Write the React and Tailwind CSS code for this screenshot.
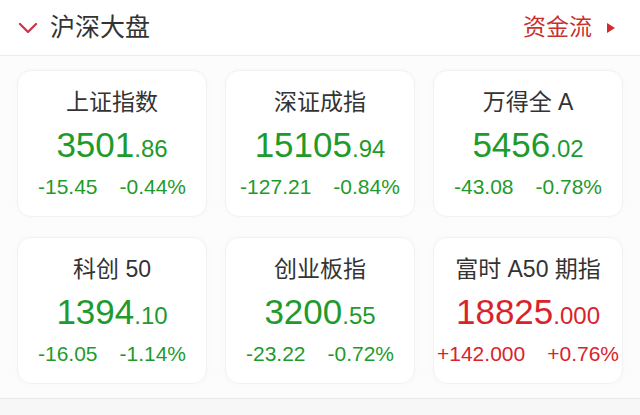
import React from 'react';

// Index snapshot cards, two rows of three
const INDICES = [
  { name: '上证指数', int: '3501', dec: '.86', chg: '-15.45', pct: '-0.44%', up: false },
  { name: '深证成指', int: '15105', dec: '.94', chg: '-127.21', pct: '-0.84%', up: false },
  { name: '万得全 A', int: '5456', dec: '.02', chg: '-43.08', pct: '-0.78%', up: false },
  { name: '科创 50', int: '1394', dec: '.10', chg: '-16.05', pct: '-1.14%', up: false },
  { name: '创业板指', int: '3200', dec: '.55', chg: '-23.22', pct: '-0.72%', up: false },
  { name: '富时 A50 期指', int: '18825', dec: '.000', chg: '+142.000', pct: '+0.76%', up: true },
];

const FONT = { fontFamily: '"Liberation Sans", "Noto Sans CJK SC", sans-serif' };

function IndexCard({ item }) {
  const color = item.up ? 'text-[#d9232b]' : 'text-[#1f9a2c]';
  return (
    <div className="h-[147px] bg-white rounded-[14px] border border-[#f2f2f2] shadow-[0_0_6px_rgba(0,0,0,0.025)] flex flex-col items-center pt-[17px]">
      <div className="text-[23px] leading-[28px] text-[#333]">{item.name}</div>
      <div className={`mt-[9px] leading-[40px] ${color}`}>
        <span className="text-[35px]">{item.int}</span>
        <span className="text-[24px]">{item.dec}</span>
      </div>
      <div className={`mt-[3px] flex gap-[22px] text-[21px] leading-[24px] ${color}`}>
        <span>{item.chg}</span>
        <span>{item.pct}</span>
      </div>
    </div>
  );
}

export default function App() {
  return (
    <div className="w-[640px] h-[415px] bg-white overflow-hidden" style={FONT}>
      <div className="h-[56px] flex items-center justify-between pl-[18px] pr-[25px] border-b border-[#ececec]">
        <div className="flex items-center gap-[12px]">
          <svg width="20" height="12" viewBox="0 0 20 12">
            <polyline points="2,2 10,10 18,2" fill="none" stroke="#c93a4c" strokeWidth="2.4" strokeLinecap="round" strokeLinejoin="round" />
          </svg>
          <span className="text-[25px] text-[#333]">沪深大盘</span>
        </div>
        <div className="flex items-center gap-[15px]">
          <span className="text-[23px] text-[#c8302e]">资金流</span>
          <svg width="8" height="10" viewBox="0 0 8 10">
            <polygon points="0,0 8,5 0,10" fill="#d02a2e" />
          </svg>
        </div>
      </div>
      <div className="bg-[#fcfcfc] px-[17px] pt-[14px] pb-[14px] grid grid-cols-3 gap-x-[18px] gap-y-[20px] border-b border-[#e8e8e8]">
        {INDICES.map((item) => (
          <IndexCard key={item.name} item={item} />
        ))}
      </div>
      <div className="h-[20px] bg-[#f7f7f7]" />
    </div>
  );
}
